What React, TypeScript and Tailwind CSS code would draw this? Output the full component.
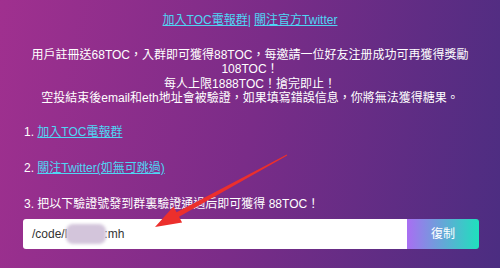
import React from "react";

export default function App() {
  const font = { fontFamily: '"Liberation Sans", "Noto Sans CJK TC", "Noto Sans CJK SC", sans-serif' };
  return (
    <div
      className="relative w-[500px] h-[268px] overflow-hidden bg-[linear-gradient(100deg,#a0308f_0%,#7a2c88_50%,#4b2d81_100%)] text-white text-[12px]"
      style={font}
    >
      <div className="px-[23px] pt-[13px] flex flex-col">
        <div className="text-center leading-[14px] whitespace-nowrap">
          <a className="text-[#4fd6f4] underline">加入TOC電報群</a>
          <span className="text-[#4fd6f4]">| </span>
          <a className="text-[#4fd6f4] underline">關注官方Twitter</a>
        </div>
        <p className="mt-[21px] text-center leading-[14.25px] whitespace-nowrap">
          用戶註冊送68TOC，入群即可獲得88TOC，每邀請一位好友注册成功可再獲得獎勵
          <br />
          108TOC！
          <br />
          每人上限1888TOC！搶完即止！
          <br />
          空投結束後email和eth地址會被驗證，如果填寫錯誤信息，你將無法獲得糖果。
        </p>
        <div className="mt-[20px] flex flex-col gap-[22px] leading-[14px] pl-[1px]">
          <div>
            1. <a className="text-[#4fd6f4] underline">加入TOC電報群</a>
          </div>
          <div>
            2. <a className="text-[#4fd6f4] underline">關注Twitter(如無可跳過)</a>
          </div>
          <div>3. 把以下驗證號發到群裏驗證通過后即可獲得 88TOC！</div>
        </div>
        <div className="mt-[8px] flex h-[30px] w-[456px] rounded-[3px] overflow-hidden">
          <div className="flex-1 bg-white flex items-center pl-[9px] text-[#333] relative">
            <span>/code/l</span>
            <span className="inline-block w-[40px] h-[20px] rounded-[7px] bg-[#d3c5db] blur-[1.5px] -ml-[1px] -mr-[2px]"></span>
            <span>:mh</span>
          </div>
          <button className="w-[72px] h-full bg-[linear-gradient(90deg,#a96ef2,#1fe0bd)] text-white text-[12px] flex items-center justify-center">
            復制
          </button>
        </div>
      </div>
      <svg className="absolute left-0 top-0 pointer-events-none" width="500" height="268">
        <polygon
          points="155,227 173.5,206.6 176.6,212.3 286.8,154.6 287.2,155.4 179,216.7 182.1,222.4"
          fill="#ec2f2c"
        />
      </svg>
    </div>
  );
}
